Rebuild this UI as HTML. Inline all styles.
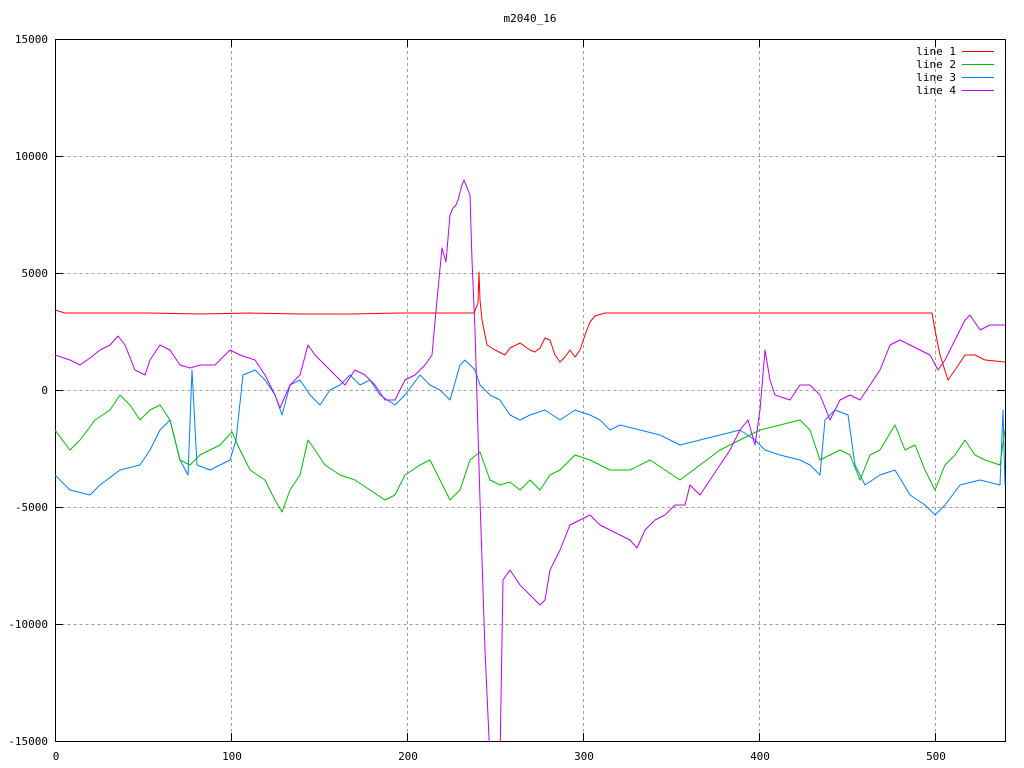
<!DOCTYPE html>
<html><head><meta charset="utf-8"><style>
html,body{margin:0;padding:0;background:#fff;}
svg{display:block;}
text{font-family:"DejaVu Sans Mono","Liberation Mono",monospace;font-size:11px;fill:#000;}
</style></head><body>
<svg width="1024" height="768" viewBox="0 0 1024 768" xmlns="http://www.w3.org/2000/svg">
<rect width="1024" height="768" fill="#fff"/>
<g stroke="#a0a0a0" stroke-width="1" stroke-dasharray="3,3" fill="none">
<path d="M55.5 156.5H1005M55.5 273.5H1005M55.5 390.5H1005M55.5 507.5H1005M55.5 624.5H1005"/>
<path d="M231.5 39V741M407.5 39V741M583.5 39V741M759.5 39V741M935.5 39V741"/>
</g>
<g stroke="#000" stroke-width="1" fill="none">
<rect x="55.5" y="39.5" width="950" height="702"/>
<path d="M55 156.5h8M55 273.5h8M55 390.5h8M55 507.5h8M55 624.5h8M1005 156.5h-8M1005 273.5h-8M1005 390.5h-8M1005 507.5h-8M1005 624.5h-8"/>
<path d="M231.5 741v-8M407.5 741v-8M583.5 741v-8M759.5 741v-8M935.5 741v-8M231.5 39v8M407.5 39v8M583.5 39v8M759.5 39v8M935.5 39v8"/>
</g>
<text x="530" y="22" text-anchor="middle">m2040_16</text>
<g text-anchor="end">
<text x="48" y="43">15000</text><text x="48" y="160">10000</text><text x="48" y="277">5000</text>
<text x="48" y="394">0</text><text x="48" y="511">-5000</text><text x="48" y="628">-10000</text><text x="48" y="745">-15000</text>
</g>
<g text-anchor="middle">
<text x="56" y="760">0</text><text x="232" y="760">100</text><text x="408" y="760">200</text>
<text x="584" y="760">300</text><text x="760" y="760">400</text><text x="936" y="760">500</text>
</g>
<g text-anchor="end">
<text x="956" y="55">line 1</text><text x="956" y="68">line 2</text><text x="956" y="81">line 3</text><text x="956" y="94">line 4</text>
</g>
<path d="M962 51.5h32" stroke="#ff0000"/>
<path d="M962 64.5h32" stroke="#00c000"/>
<path d="M962 77.5h32" stroke="#0080ff"/>
<path d="M962 90.5h32" stroke="#c000ff"/>
<svg x="55" y="39" width="951" height="703" viewBox="55 39 951 703" overflow="hidden">
<g fill="none" stroke-width="1" stroke-linejoin="round">
<polyline stroke="#0080ff" points="55,475 70,490 90,495 100,485 120,470 140,465 150,450 160,430 170,420 180,460 188,475 192,370 197,465 210,470 230,460 236,440 243,375 255,370 265,380 275,395 282,415 290,385 300,380 310,395 320,405 330,390 340,385 350,375 360,385 370,380 380,395 395,405 405,395 420,375 430,385 440,390 450,400 460,365 465,360 475,370 480,385 490,395 500,400 510,415 520,420 530,415 545,410 560,420 575,410 590,415 600,420 610,430 620,425 640,430 660,435 680,445 700,440 720,435 740,430 755,440 765,450 780,455 800,460 810,465 820,475 825,420 835,410 848,415 855,465 865,485 880,475 895,470 910,495 925,505 935,515 945,505 960,485 980,480 1000,485 1003,410 1005,485"/>
<polyline stroke="#00c000" points="55,430 70,450 80,440 95,420 110,410 120,395 130,405 140,420 150,410 160,405 170,420 180,460 190,465 200,455 210,450 220,445 232,432 240,450 250,470 265,480 275,500 282,512 290,490 300,475 308,440 315,450 325,465 340,475 355,480 370,490 385,500 395,495 405,475 420,465 430,460 440,480 450,500 460,490 470,460 480,452 490,480 500,485 510,482 520,490 530,480 540,490 550,475 560,470 575,455 590,460 610,470 630,470 650,460 680,480 700,465 720,450 740,440 760,430 780,425 800,420 810,430 820,460 830,455 840,450 850,455 860,480 870,455 880,450 895,425 905,450 915,445 925,470 935,490 945,465 955,455 965,440 975,455 985,460 1000,465 1005,430"/>
<polyline stroke="#c000ff" points="55,355 70,360 80,365 90,358 100,350 110,345 118,336 125,345 135,370 145,375 150,360 160,345 170,350 180,365 190,368 200,365 215,365 230,350 240,355 255,360 265,375 275,395 280,408 290,385 300,375 308,345 315,355 325,365 335,375 345,385 355,370 365,375 375,385 385,400 395,400 405,380 415,375 425,365 432,355 437,300 442,248 446,262 450,215 453,208 456,205 458,200 462,185 464,180 470,195 472,260 475,330 480,500 485,650 490,760 500,760 503,580 510,570 520,585 530,595 540,605 545,600 550,570 560,550 570,525 580,520 590,515 600,525 610,530 620,535 630,540 637,548 645,530 655,520 665,515 675,505 685,505 690,485 700,495 710,480 720,465 730,450 740,430 748,420 755,445 760,410 765,350 770,380 775,395 790,400 800,385 810,385 820,395 830,420 840,400 850,395 860,400 870,385 880,370 890,345 900,340 910,345 920,350 930,355 938,370 945,360 955,340 965,320 970,315 980,330 990,325 1005,325"/>
<polyline stroke="#ff0000" points="55,310 65,313 100,313 150,313 200,314 250,313 300,314 350,314 400,313 450,313 474,313 478,303 479,272 480,300 482,320 487,345 495,350 505,355 510,348 520,343 530,350 535,352 540,348 545,338 550,340 555,355 560,362 565,357 570,350 575,357 580,350 585,335 590,322 595,316 605,313 620,313 700,313 800,313 900,313 932,313 935,330 940,355 948,380 955,370 965,355 975,355 985,360 1005,362"/>
</g>
</svg>
</svg>
</body></html>
